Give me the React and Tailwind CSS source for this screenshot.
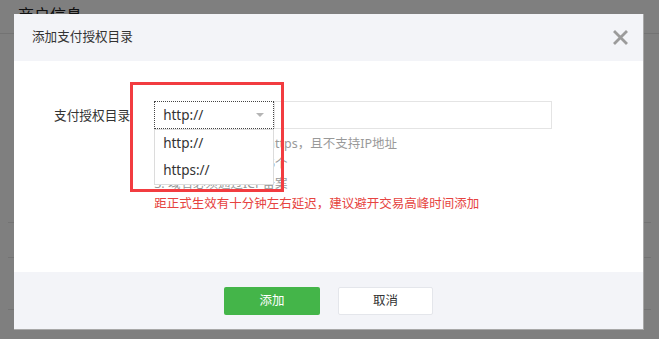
import React from 'react';

const FONT = { fontFamily: '"Noto Sans", "Noto Sans CJK SC", sans-serif' };

const hints = [
  '1. 目录仅支持http或https，且不支持IP地址',
  '2. 支付目录最多配置5个',
  '3. 域名必须通过ICP备案',
];

export default function App() {
  return (
    <div className="relative w-[659px] h-[339px] overflow-hidden bg-white" style={FONT}>
      {/* page underneath the modal */}
      <div className="flex flex-col h-full">
        <div className="h-[34px] px-[18px] pt-[3px] text-[16px] text-[#222] border-b border-[#e6e6e6]">商户信息</div>
        <div className="flex-1 mx-[8px] mt-[188px] border-t border-[#e6e6e6]">
          <div className="h-[35px] border-b border-[#e6e6e6]"></div>
          <div className="h-[52px] border-b border-[#e6e6e6]"></div>
        </div>
      </div>

      {/* overlay */}
      <div className="absolute inset-0 bg-black/50"></div>

      {/* dialog */}
      <div className="absolute left-[14px] top-[14px] w-[630px] h-[316px] flex flex-col bg-white border-r border-b border-[#a8a8a8]">
        <div className="h-[47px] shrink-0 flex items-center justify-between pl-[18px] pr-[15px] bg-[#f3f4f8]">
          <span className="text-[12.6px] text-[#333]">添加支付授权目录</span>
          <svg width="15" height="15" viewBox="0 0 15 15" className="text-[#9b9b9b]">
            <path d="M2 2 L13 13 M13 2 L2 13" stroke="currentColor" strokeWidth="2.8" strokeLinecap="square" />
          </svg>
        </div>

        <div className="flex-1 pt-[40px] pl-[40px]">
          <div className="flex items-start">
            <label className="h-[28px] leading-[28px] text-[12.7px] text-[#333]">支付授权目录</label>
            <div className="ml-[24px] flex flex-col">
              <div className="flex">
                <div className="relative w-[120px] h-[28px] flex items-center justify-between pl-[8px] pr-[9px] border border-dotted border-[#444] bg-white">
                  <span className="text-[13.5px] text-[#333]">http://</span>
                  <span className="w-0 h-0 border-l-[4px] border-r-[4px] border-t-[4px] border-l-transparent border-r-transparent border-t-[#b5b5b5]"></span>
                  {/* open dropdown list */}
                  <div className="absolute left-[-1px] top-[27px] w-[120px] flex flex-col bg-white border border-[#dcdcdc] z-10">
                    <div className="h-[27px] leading-[27px] pl-[8px] text-[13.5px] text-[#333]">http://</div>
                    <div className="h-[27px] leading-[27px] pl-[8px] text-[13.5px] text-[#333]">https://</div>
                  </div>
                </div>
                <div className="w-[278px] h-[28px] border border-[#e4e4e4]"></div>
              </div>
              <div className="mt-[5px] flex flex-col text-[12.5px] leading-[20px]">
                {hints.map((h) => (
                  <span key={h} className="text-[#999]">{h}</span>
                ))}
                <span className="text-[#e64340]">距正式生效有十分钟左右延迟，建议避开交易高峰时间添加</span>
              </div>
            </div>
          </div>
        </div>

        <div className="h-[57px] shrink-0 flex items-start justify-center gap-[18px] pt-[15px] bg-[#f3f4f8]">
          <button className="w-[96px] h-[28px] rounded-[2px] bg-[#44b549] text-white text-[12.5px]">添加</button>
          <button className="w-[95px] h-[28px] rounded-[2px] bg-white border border-[#e4e6eb] text-[#333] text-[12.5px]">取消</button>
        </div>
      </div>

      {/* red annotation box */}
      <div className="absolute left-[130px] top-[82px] w-[154px] h-[110px] border-[3px] border-[#f23c40] z-20"></div>
    </div>
  );
}
